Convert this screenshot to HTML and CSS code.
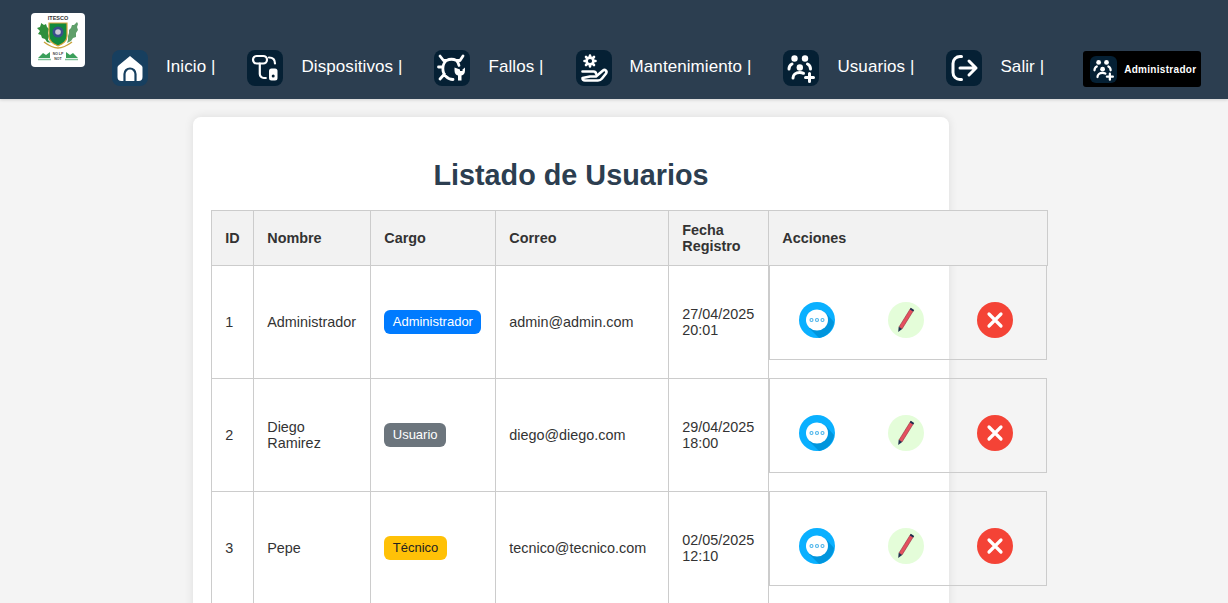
FILE: index.html
```html
<!DOCTYPE html>
<html lang="es">
<head>
  <meta charset="UTF-8" />
  <title>Listado de Usuarios</title>
  <meta name="viewport" content="width=device-width, initial-scale=1.0" />
  <link rel="stylesheet" href="styles.css">
</head>
<body>
  <svg class="defs" width="0" height="0" aria-hidden="true">
    <symbol id="i-users" viewBox="0 0 36 36">
      <circle cx="11.500" cy="8.500" r="3.200" fill="#fff"/>
      <circle cx="22" cy="8.500" r="3.200" fill="#fff"/>
      <circle cx="16.800" cy="17.500" r="3.200" fill="#fff"/>
      <path d="M6 19c0-2 1-4 3-5M27.500 19c0-2-1-4-3-5M10 28c0-3 2.500-5.500 6.800-5.500 1.500 0 2.700.3 3.700.8" fill="none" stroke="#fff" stroke-width="3" stroke-linecap="round"/>
      <path d="M26.500 23.500v8M22.500 27.500h8" fill="none" stroke="#fff" stroke-width="3" stroke-linecap="round"/>
    </symbol>
  </svg>

  <!-- Barra superior -->
  <header class="navbar">
    <div class="logo">
      <svg width="54" height="54" viewBox="0 0 54 54">
        <text x="27" y="7" text-anchor="middle" class="logo-text">ITESCO</text>
        <path d="M10 10l3 2 2-1 1 3 2 2-1 4 1 3-1 4 3 3-4-1-2-3-3-1-1-3-3-1 2-3-3-3 3-1 1-3z" fill="#2f8f3c"/>
        <path d="M46 9l-3 3-2 0-1 3-2 2 0 3-1 3 0 4-1 3 4-2 2-3 3-1 0-4 2-3-1-3 1-3z" fill="#5f9f6a"/>
        <path d="M18 10h18v13c0 6-5 8-9 10-4-2-9-4-9-10z" fill="#128a3e" stroke="#d9a63a" stroke-width="1.200"/>
        <circle cx="27" cy="19" r="5.500" fill="#3a4f8c"/>
        <circle cx="27" cy="19" r="2.800" fill="#c9c9d6"/>
        <path d="M13 29c4 3 9 6 14 6s10-3 14-6" fill="none" stroke="#c9a23c" stroke-width="1.500"/>
        <path d="M7 45l5-5 3 2 4-3v6zM47 45l-5-5-3 2-4-3v6z" fill="#3a9f5a"/>
        <path d="M7 46.500h13M34 46.500h13" stroke="#7fc29a" stroke-width="1.500"/>
        <text x="27" y="42" text-anchor="middle" class="logo-small">NO LP</text>
        <text x="27" y="47" text-anchor="middle" class="logo-small">NOT</text>
      </svg>
    </div>

    <nav class="nav-links">
      <a class="nav-item" href="#">
        <span class="nav-icon home">
          <svg width="36" height="36" viewBox="0 0 36 36">
            <path d="M18 6L6.500 15.500a2.500 2.500 0 0 0-1 2V27a4 4 0 0 0 4 4h17a4 4 0 0 0 4-4v-9.500a2.500 2.500 0 0 0-1-2z" fill="#fff"/>
            <path d="M12.500 31v-7a5.500 5.500 0 0 1 11 0v7" fill="none" stroke="#173f5f" stroke-width="2.200"/>
          </svg>
        </span>
        <span>Inicio |</span>
      </a>
      <a class="nav-item" href="#">
        <span class="nav-icon">
          <svg width="36" height="36" viewBox="0 0 36 36" fill="none" stroke="#fff" stroke-width="2.200" stroke-linecap="round">
            <rect x="6" y="6" width="14" height="7.500" rx="3.700"/>
            <path d="M12.800 13.500v10.500a4 4 0 0 0 4 4h2M22 7.500c3.500 0 6 2 6 6"/>
            <rect x="22" y="18.500" width="8.500" height="12" rx="2.500" fill="#fff" stroke="none"/>
            <circle cx="26.200" cy="26" r="1.500" fill="#052034" stroke="none"/>
          </svg>
        </span>
        <span>Dispositivos |</span>
      </a>
      <a class="nav-item" href="#">
        <span class="nav-icon">
          <svg width="36" height="36" viewBox="0 0 36 36" fill="none" stroke="#fff" stroke-width="2.800" stroke-linecap="round" stroke-linejoin="round">
            <path d="M6 6l3.500 4.500h3M29 6l-3 4.500h-3.500M4.500 17H9M6 29l4.500-5M12.500 10.500C8 14 7.500 22 12 26.500c2 2 4.500 3 7 3M12.500 10.500c3-1.500 7-1.500 10 0 1.500 1.500 2 3 2.500 5"/>
            <path d="M20.500 17.500v3c0 3 1.500 4.500 3.500 5v5h3.500v-5c2-.5 3.500-2 3.500-5v-3l-2.500 2v1.500h-2.500v-1.500z" fill="#fff" stroke="none"/>
          </svg>
        </span>
        <span>Fallos |</span>
      </a>
      <a class="nav-item" href="#">
        <span class="nav-icon">
          <svg width="36" height="36" viewBox="0 0 36 36" fill="none" stroke="#fff" stroke-width="2.600" stroke-linecap="round" stroke-linejoin="round">
            <circle cx="14" cy="11" r="3.400"/>
            <path d="M14 5.500v1.500M14 15v1.500M8.500 11H10M18 11h1.500M10 7l1 1M18 7l-1 1M10 15l1-1M18 15l-1-1"/>
            <path d="M6.500 21.500h11c1.500 0 2.500 1 2.500 2.200M14 26.500h6l7-6c2-1.500 4.500.5 3 3l-4 5c-1 1.300-2.500 2-4 2H9a2.500 2.500 0 0 1-2.500-2.500z"/>
          </svg>
        </span>
        <span>Mantenimiento |</span>
      </a>
      <a class="nav-item" href="#">
        <span class="nav-icon">
          <svg width="36" height="36"><use href="#i-users"/></svg>
        </span>
        <span>Usuarios |</span>
      </a>
      <a class="nav-item" href="#">
        <span class="nav-icon">
          <svg width="36" height="36" viewBox="0 0 36 36" fill="none" stroke="#fff" stroke-width="3" stroke-linecap="round" stroke-linejoin="round">
            <path d="M15.500 6.500h-1.500a7 7 0 0 0-7 7v9a7 7 0 0 0 7 7h1.500"/>
            <path d="M14 18h16M23 11l7 7-7 7"/>
          </svg>
        </span>
        <span>Salir |</span>
      </a>
    </nav>

    <div class="user-badge">
      <span class="user-icon"><svg width="27" height="27"><use href="#i-users"/></svg></span>
      <span>Administrador</span>
    </div>
  </header>

  <!-- Contenido -->
  <main class="card">
    <h2>Listado de Usuarios</h2>
    <table>
      <colgroup>
        <col class="c-id"><col class="c-nombre"><col class="c-cargo"><col class="c-correo"><col class="c-fecha"><col class="c-acciones">
      </colgroup>
      <thead>
        <tr>
          <th>ID</th>
          <th>Nombre</th>
          <th>Cargo</th>
          <th>Correo</th>
          <th>Fecha Registro</th>
          <th>Acciones</th>
        </tr>
      </thead>
      <tbody>
        <tr>
          <td>1</td>
          <td>Administrador</td>
          <td><span class="badge admin">Administrador</span></td>
          <td>admin@admin.com</td>
          <td>27/04/2025 20:01</td>
          <td class="acciones">
            <a class="btn" href="#"><svg width="36" height="36" viewBox="0 0 36 36"><use href="#i-ver"/></svg></a>
            <a class="btn" href="#"><svg width="36" height="36" viewBox="0 0 36 36"><use href="#i-editar"/></svg></a>
            <a class="btn" href="#"><svg width="36" height="36" viewBox="0 0 36 36"><use href="#i-borrar"/></svg></a>
          </td>
        </tr>
        <tr>
          <td>2</td>
          <td>Diego Ramirez</td>
          <td><span class="badge usuario">Usuario</span></td>
          <td>diego@diego.com</td>
          <td>29/04/2025 18:00</td>
          <td class="acciones">
            <a class="btn" href="#"><svg width="36" height="36" viewBox="0 0 36 36"><use href="#i-ver"/></svg></a>
            <a class="btn" href="#"><svg width="36" height="36" viewBox="0 0 36 36"><use href="#i-editar"/></svg></a>
            <a class="btn" href="#"><svg width="36" height="36" viewBox="0 0 36 36"><use href="#i-borrar"/></svg></a>
          </td>
        </tr>
        <tr>
          <td>3</td>
          <td>Pepe</td>
          <td><span class="badge tecnico">Técnico</span></td>
          <td>tecnico@tecnico.com</td>
          <td>02/05/2025 12:10</td>
          <td class="acciones">
            <a class="btn" href="#"><svg width="36" height="36" viewBox="0 0 36 36"><use href="#i-ver"/></svg></a>
            <a class="btn" href="#"><svg width="36" height="36" viewBox="0 0 36 36"><use href="#i-editar"/></svg></a>
            <a class="btn" href="#"><svg width="36" height="36" viewBox="0 0 36 36"><use href="#i-borrar"/></svg></a>
          </td>
        </tr>
      </tbody>
    </table>
  </main>

  <svg class="defs" width="0" height="0" aria-hidden="true">
    <symbol id="i-ver" viewBox="0 0 36 36">
      <circle cx="18" cy="18" r="18" fill="#0ab0ff"/>
      <path d="M10 26L26 10 35 20A18 18 0 0 1 20 35.900z" fill="#0095dd"/>
      <ellipse cx="18" cy="18" rx="11" ry="10.500" fill="#fff"/>
      <g fill="none" stroke="#4bb4ea" stroke-width="1.100">
        <circle cx="12.500" cy="18" r="1.500"/>
        <circle cx="18" cy="18" r="1.500"/>
        <circle cx="23.500" cy="18" r="1.500"/>
      </g>
    </symbol>
    <symbol id="i-editar" viewBox="0 0 36 36">
      <circle cx="18" cy="18" r="18" fill="#e4fdd9"/>
      <path d="M22.500 6.500l3 2L14 27l-3-2z" fill="#e5505f" stroke="#8f3040" stroke-width=".6"/>
      <path d="M22.800 5.800l3.400 2.200-1 1.600-3.400-2.200z" fill="#1f2f4f"/>
      <path d="M10.700 24.800l3.400 2.200-3.900 3z" fill="#1f2f4f"/>
    </symbol>
    <symbol id="i-borrar" viewBox="0 0 36 36">
      <circle cx="18" cy="18" r="18" fill="#f44336"/>
      <path d="M12 12l12 12M24 12L12 24" stroke="#fff" stroke-width="3.200" stroke-linecap="round"/>
    </symbol>
  </svg>
</body>
</html>
```

FILE: styles.css
```css
/* ===== Basic Styles ===== */
body {
  margin: 0;
  font-family: "Liberation Sans", Arial, sans-serif;
  background: #f4f4f4;
  color: #333;
}
.defs {
  position: absolute;
}

/* ===== Navbar ===== */
.navbar {
  display: flex;
  align-items: flex-start;
  height: 99px;
  padding: 13px 0 0 31px;
  box-sizing: border-box;
  background: #2c3e50;
  box-shadow: 0 1px 3px rgba(0,0,0,0.15);
}
.logo {
  width: 54px;
  height: 54px;
  background: #fff;
  border-radius: 4px;
}
.logo-text {
  font: bold 5.500px "Liberation Sans", sans-serif;
  fill: #333;
}
.logo-small {
  font: bold 3.500px "Liberation Sans", sans-serif;
  fill: #444;
}
.nav-links {
  display: flex;
  align-items: center;
  gap: 32px;
  margin: 37px 0 0 27px;
}
.nav-item {
  display: flex;
  align-items: center;
  gap: 18px;
  color: #fff;
  font-size: 17px;
  letter-spacing: 0.08px;
  text-decoration: none;
}
.nav-item > span:last-child {
  position: relative;
  top: -1px;
}
.nav-icon {
  display: block;
  width: 36px;
  height: 36px;
  background: #052034;
  border-radius: 8px;
}
.nav-icon.home {
  background: #173f5f;
}
.nav-icon svg {
  display: block;
}
.user-badge {
  display: flex;
  align-items: center;
  gap: 7px;
  width: 118px;
  height: 36px;
  margin: 38px 0 0 39px;
  padding-left: 7px;
  box-sizing: border-box;
  background: #000;
  border-radius: 3px;
  color: #fff;
  font-size: 10px;
  font-weight: bold;
  letter-spacing: 0.3px;
}
.user-icon {
  display: block;
  width: 27px;
  height: 27px;
  background: #052034;
  border-radius: 6px;
}
.user-icon svg {
  display: block;
}

/* ===== Card ===== */
.card {
  width: 756px;
  margin: 18px 0 0 193px;
  padding: 40px 18px 40px;
  box-sizing: border-box;
  background: #fff;
  border-radius: 8px;
  box-shadow: 0 0 10px rgba(0,0,0,0.1);
}
h2 {
  margin: 0 0 17px;
  font-size: 28.800px;
  line-height: 36px;
  text-align: center;
  color: #2c3e50;
}

/* ===== Table ===== */
table {
  width: 836px;
  table-layout: fixed;
  border-collapse: collapse;
  font-size: 14.400px;
}
.c-id { width: 42px; }
.c-nombre { width: 117px; }
.c-cargo { width: 125px; }
.c-correo { width: 173px; }
.c-fecha { width: 100px; }
.c-acciones { width: 279px; }
th, td {
  padding: 14px 14px 14px 13.250px;
  border: 1px solid #ccc;
  text-align: left;
  vertical-align: middle;
}
th {
  padding-top: 11px;
  padding-bottom: 11px;
  background: #f2f2f2;
  line-height: 16px;
}
tbody tr {
  height: 113px;
}
td {
  line-height: 16px;
}
td.acciones {
  display: grid;
  grid-template-columns: repeat(3, 89px);
  width: 278px;
  height: 95px;
  margin-top: -1px;
  padding: 36px 0 0 2px;
  box-sizing: border-box;
}
.btn {
  display: block;
  width: 36px;
  height: 36px;
  justify-self: center;
}
.btn svg {
  display: block;
}
.badge {
  display: inline-block;
  padding: 4px 8.500px;
  border-radius: 6px;
  font-size: 13px;
  color: #fff;
}
.badge.admin { background: #007bff; }
.badge.usuario { background: #6c757d; }
.badge.tecnico { background: #ffc107; color: #222; }
```
